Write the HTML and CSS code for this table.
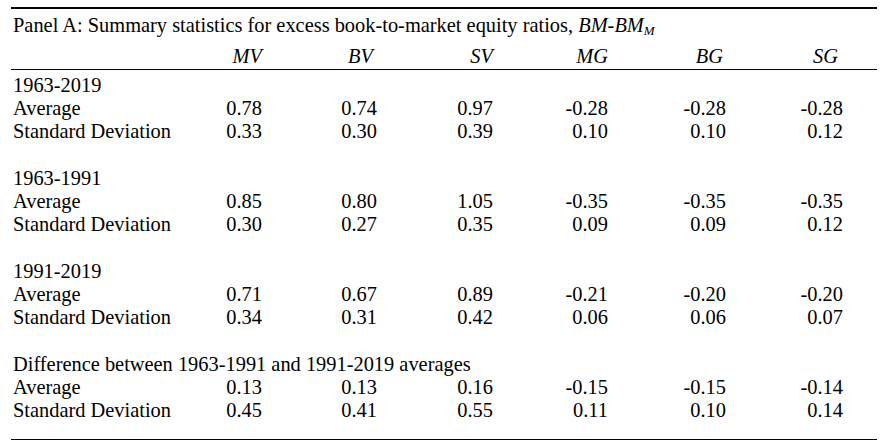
FILE: index.html
```html
<!DOCTYPE html>
<html lang="en">
<head>
<meta charset="utf-8">
<title>Panel A</title>
<link rel="stylesheet" href="styles.css">
</head>
<body>
<div class="panel">
  <div class="title">Panel A: Summary statistics for excess book-to-market equity ratios, <i>BM-BM<sub>M</sub></i></div>
  <table class="stats">
    <colgroup>
      <col class="c-label"><col class="c1"><col class="c2"><col class="c3"><col class="c4"><col class="c5"><col class="c6">
    </colgroup>
    <thead>
      <tr class="head">
        <th></th><th>MV</th><th>BV</th><th>SV</th><th>MG</th><th>BG</th><th>SG</th>
      </tr>
    </thead>
    <tbody>
      <tr class="first"><td class="sec" colspan="7">1963-2019</td></tr>
      <tr><td>Average</td><td>0.78</td><td>0.74</td><td>0.97</td><td>-0.28</td><td>-0.28</td><td>-0.28</td></tr>
      <tr><td>Standard Deviation</td><td>0.33</td><td>0.30</td><td>0.39</td><td>0.10</td><td>0.10</td><td>0.12</td></tr>
      <tr class="blank"><td colspan="7"></td></tr>
      <tr><td class="sec" colspan="7">1963-1991</td></tr>
      <tr><td>Average</td><td>0.85</td><td>0.80</td><td>1.05</td><td>-0.35</td><td>-0.35</td><td>-0.35</td></tr>
      <tr><td>Standard Deviation</td><td>0.30</td><td>0.27</td><td>0.35</td><td>0.09</td><td>0.09</td><td>0.12</td></tr>
      <tr class="blank"><td colspan="7"></td></tr>
      <tr><td class="sec" colspan="7">1991-2019</td></tr>
      <tr><td>Average</td><td>0.71</td><td>0.67</td><td>0.89</td><td>-0.21</td><td>-0.20</td><td>-0.20</td></tr>
      <tr><td>Standard Deviation</td><td>0.34</td><td>0.31</td><td>0.42</td><td>0.06</td><td>0.06</td><td>0.07</td></tr>
      <tr class="blank"><td colspan="7"></td></tr>
      <tr><td class="sec" colspan="7">Difference between 1963-1991 and 1991-2019 averages</td></tr>
      <tr><td>Average</td><td>0.13</td><td>0.13</td><td>0.16</td><td>-0.15</td><td>-0.15</td><td>-0.14</td></tr>
      <tr class="last"><td>Standard Deviation</td><td>0.45</td><td>0.41</td><td>0.55</td><td>0.11</td><td>0.10</td><td>0.14</td></tr>
    </tbody>
  </table>
</div>
</body>
</html>
```
FILE: styles.css
```css
html, body {
  margin: 0;
  padding: 0;
  background: #ffffff;
}

.panel {
  margin: 7px 0 0 11px;
  width: 866px;
  border-top: 2px solid #000;
  border-bottom: 1.5px solid #000;
  font-family: "Liberation Serif", "Times New Roman", serif;
  font-size: 20.4px;
  line-height: 23.25px;
  color: #000;
  padding-bottom: 17px;
}

.title {
  padding: 4.5px 0 0 2px;
  white-space: nowrap;
}

.title sub {
  font-size: 13px;
  line-height: 0;
  vertical-align: -3px;
}

.stats {
  border-collapse: collapse;
  table-layout: fixed;
  width: 866px;
}

.c-label { width: 135px; }
.c1 { width: 116px; }
.c2 { width: 115px; }
.c3 { width: 116px; }
.c4 { width: 115px; }
.c5 { width: 118px; }
.c6 { width: 151px; }

.stats th,
.stats td {
  padding: 0;
  height: 23.25px;
  text-align: right;
  white-space: nowrap;
  font-weight: normal;
  vertical-align: top;
}

.stats td:last-child,
.stats th:last-child {
  padding-right: 34px;
}

.stats td:first-child {
  text-align: left;
  padding-left: 2px;
  padding-right: 0;
  overflow: visible;
}

.stats .head th {
  font-style: italic;
  padding-top: 8.5px;
  border-bottom: 1.5px solid #000;
}

.stats .head th:nth-child(3) { padding-right: 4px; }
.stats .head th:nth-child(6) { padding-right: 3px; }
.stats .head th:nth-child(7) { padding-right: 39px; }

.stats .first td {
  padding-top: 4px;
}

.stats td.sec {
  text-align: left;
}
```
